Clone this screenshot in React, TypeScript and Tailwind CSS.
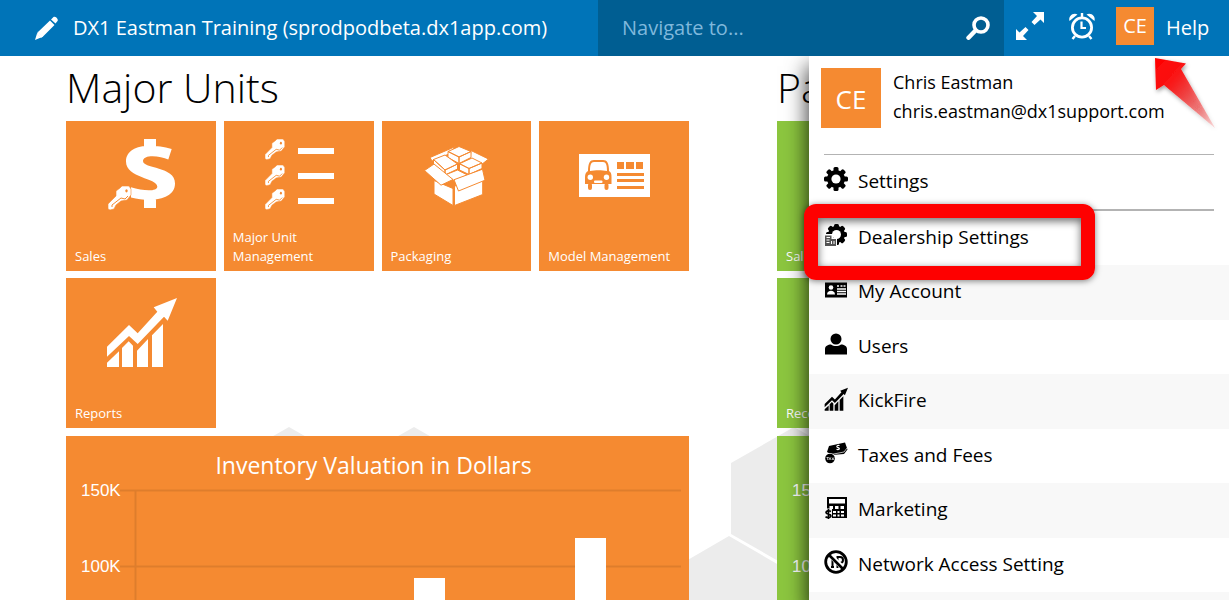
import React from "react";

type IconProps = { className?: string };

const ORANGE = "#f58a31";

const KeyShape = ({ transform }: { transform?: string }) => (
  <g transform={transform}>
    <path
      d="M12 2 14 0h7l2 3v6l-4 5-6 1-5 4-2 4-4 1-2-1v-5l8-8V5z"
      fill="white"
      stroke={ORANGE}
      strokeWidth="0.6"
    />
    <path d="M4 21v-2l9-7 4 1 3-3" fill="none" stroke={ORANGE} strokeWidth="1" />
    <ellipse cx="18.5" cy="4.8" rx="1.2" ry="1.6" fill={ORANGE} />
  </g>
);

const SalesIcon = ({ className }: IconProps) => (
  <svg viewBox="0 0 72 72" className={className} aria-hidden="true">
    <path
      fill="white"
      d="M39 0h12v9h-12zM39 58h12v11h-12zM66.700 10 63.300 20.500C55 16.500 38 15 38 22c0 8 32 5 32 22.500C70 60 48 64 26 58.500V48.300c12 3.700 26.300 4.700 26.300-.8C52.300 39 21 39 21 22.500 21 7 42 3 66.700 10z"
    />
    <KeyShape transform="translate(3 47)" />
  </svg>
);

const KeyListIcon = ({ className }: IconProps) => (
  <svg viewBox="0 0 72 72" className={className} aria-hidden="true">
    <KeyShape transform="translate(2 0) scale(.86)" />
    <KeyShape transform="translate(2 26) scale(.86)" />
    <KeyShape transform="translate(2 50) scale(.86)" />
    <path fill="white" d="M35 9h36v6H35zM35 34h36v6H35zM35 59h36v6H35z" />
  </svg>
);

const PackageIcon = ({ className }: IconProps) => (
  <svg viewBox="0 0 72 72" className={className} aria-hidden="true">
    <g fill="white" stroke={ORANGE} strokeWidth="1" strokeLinejoin="round">
      <path d="M10 18.500 35.500 7.500 29 15 12 22z" />
      <path d="M51 11.500 68.500 20 61 26 50 20z" />
      <path d="M28 12.500 39 7.500l12 5-12 5.500zM28 12.500v6l11 6V18zM51 12.500v6l-12 6V18z" />
      <path d="M13.500 20.500 25 16l12.500 9L25 31zM13.500 20.500V25L25 36v-5zM37.500 25v5L25 36v-5z" />
      <path d="M39.500 24.700 52 19l10 5-13 5.500zM39.500 24.700V31l9.500 4.500v-6zM62 24v5.500l-13 6v-6z" />
      <path d="m25 36 12.500-5 10 5L34 41.500z" />
      <path d="m14 41.500 19 8V66.500L14 55z" />
      <path d="M34.500 47 62.700 41v14.500L34.500 66.500z" />
      <path d="m4.500 31.500 9.500-6.500 19 15.500-12 5.700z" />
      <path d="m34 40.700 28.500-10.500 2.500 11-26.500 10.800z" />
    </g>
  </svg>
);

const ModelIcon = ({ className }: IconProps) => (
  <svg viewBox="0 0 72 72" className={className} aria-hidden="true">
    <path fill="white" d="M1 15h71v43H1z" />
    <g fill={ORANGE}>
      <path d="M39 23h7v7h-7zM48 23h8v7h-8zM58 23h7v7h-7zM39 34h27v3H39zM39 40h27v3H39zM39 47h27v3H39z" />
      <path d="M10 32c0-8 2-11 6-11h9c4 0 6 3 6 11 2 1 2.500 3 2.500 6v7H7v-7c0-3 1-5 3-6z" />
      <rect x="10" y="44" width="4" height="7" rx="2" />
      <rect x="26.500" y="44" width="4" height="7" rx="2" />
    </g>
    <g fill="white">
      <path d="M12 32c0-6 1-9 4-9h9c3 0 4 3 4 9-5-1-12-1-17 0z" />
      <circle cx="12.300" cy="38.300" r="2.700" />
      <circle cx="28.500" cy="38.300" r="2.700" />
      <rect x="16" y="41.500" width="8.500" height="2.500" rx="1" />
    </g>
  </svg>
);

const GrowthIcon = ({ className }: IconProps) => (
  <svg viewBox="0 0 72 72" className={className} fill="currentColor" aria-hidden="true">
    <path d="M2 50.700 24 29l8.700 8.300 19.600-21.600-3.600-4.400L72 2l-9.300 22.700-3.700-4L32.700 48 24 40 2 60.700z" />
    <path d="M2 66.700 14 55.300V71H2zM17 52l6.700-6.700L28 49.700V71H17zM32 54.700 43 43v28H32zM47 39.300 58 28v43H47z" />
  </svg>
);

const teeth = [0, 45, 90, 135];

const GearIcon = ({ className }: IconProps) => (
  <svg viewBox="0 0 24 24" className={className} aria-hidden="true">
    {teeth.map((angle) => (
      <rect key={angle} x="9.500" y="0" width="5" height="24" rx="1.500" transform={`rotate(${angle} 12 12)`} />
    ))}
    <circle cx="12" cy="12" r="9" />
    <circle cx="12" cy="12" r="4.600" fill="white" />
  </svg>
);

const DealershipIcon = ({ className }: IconProps) => (
  <svg viewBox="0 0 24 24" className={className} aria-hidden="true">
    {teeth.map((angle) => (
      <rect key={angle} x="10" y="1" width="5" height="21" rx="1.500" transform={`rotate(${angle} 12.500 11.500)`} />
    ))}
    <circle cx="12.500" cy="11.500" r="8.500" />
    <circle cx="12.500" cy="11.500" r="4.500" fill="white" />
    <path d="M0 11h9v4h4v9H0z" fill="white" />
    <path d="M1 12.500h6.500v3.500H12v7H1z" fill="#555" />
    <path d="M2.500 14.500H6M2.500 17h3M2.500 19.500h3M7.500 18v3M10 18v3" stroke="white" strokeWidth="1" />
  </svg>
);

const IdCardIcon = ({ className }: IconProps) => (
  <svg viewBox="0 0 24 24" className={className} aria-hidden="true">
    <path d="M1 4.500h22v15H1z" />
    <circle cx="7" cy="9.500" r="2.300" fill="white" />
    <path d="M3 16.500c0-5 8-5 8 0z" fill="white" />
    <path d="M13 8h2M16.500 8h2M19.500 8h2M13 11h9M13 13.500h9M13 16h9" stroke="white" strokeWidth="1.300" />
  </svg>
);

const UserIcon = ({ className }: IconProps) => (
  <svg viewBox="0 0 24 24" className={className} aria-hidden="true">
    <circle cx="12" cy="7" r="5.500" />
    <path d="M1 22.500V17c0-3 3-4.500 6-4.500 3 2 7 2 10 0 3 0 6 1.500 6 4.500v5.500z" />
  </svg>
);

const TaxIcon = ({ className }: IconProps) => (
  <svg viewBox="0 0 24 24" className={className} aria-hidden="true">
    <path d="m5 5 16-3.500 2.500 7L20 13 8 14l-5-3z" />
    <path d="m7 13.500 13-2.500 3-4" fill="none" stroke="white" strokeWidth=".7" />
    <path d="M15.500 4.500c-2-.5-3 .5-2.500 1.500.5.800 2 .5 2.300 1.500.2 1-1.300 1.500-2.800.8" fill="none" stroke="white" strokeWidth="1.200" />
    <circle cx="6" cy="17.500" r="5.500" fill="white" />
    <circle cx="6" cy="17.500" r="4.800" />
    <path d="M2.500 16.500h2.300M3.700 16.500V19M5 19l1-2.500L7 19M8 16.500 9.800 19M9.800 16.500 8 19" fill="none" stroke="white" strokeWidth=".7" />
  </svg>
);

const CalculatorIcon = ({ className }: IconProps) => (
  <svg viewBox="0 0 24 24" className={className} aria-hidden="true">
    <path d="M3 1h20v21H7v-9H3z" />
    <path
      fill="white"
      d="M5 3h16v4.500H5zM5.500 10h3.500v3h-3.500zM11 10h3.500v3H11zM16.500 10H20v3h-3.500zM9 15h3v2H9zM13.500 15h2v2h-2zM17 15h3v2h-3zM9 18.500h3v2H9zM13.500 18.500h2v2h-2zM17 18.500h3v2h-3z"
    />
    <path d="M0 12.500h8V24H0z" fill="#f8f8f8" />
    <path d="M7 15.500c-2.500-1.500-5-.5-5 1 0 2 5 1.300 5 3.500 0 1.700-3.500 2-5.500.7M4.500 13v10" fill="none" stroke="black" strokeWidth="1.700" />
  </svg>
);

const NoNetworkIcon = ({ className }: IconProps) => (
  <svg viewBox="0 0 24 24" className={className} fill="none" stroke="black" aria-hidden="true">
    <path d="M7 7h3M8.500 7v9M7 17h3M13.500 18V7h2.500c4 0 4 6 0 6h-2.500" strokeWidth="2" />
    <path d="m4.500 3.500 16 16" stroke="white" strokeWidth="5" />
    <circle cx="12" cy="12" r="10.300" strokeWidth="2.800" />
    <path d="m4.500 4.500 15 15" strokeWidth="2.600" />
  </svg>
);

const PencilIcon = ({ className }: IconProps) => (
  <svg viewBox="0 0 24 24" className={className} fill="white" aria-hidden="true">
    <path d="M16 3.500 18.500 1c1.500-1.500 5.500 2 4 4l-2 2.500zM15 4.500 19.500 9 7.500 21 3 16zM2 17.500 6 21.500 0 24z" />
    <path d="M3 15.500 8 20.500 6 22 2 18z" />
  </svg>
);

const SearchIcon = ({ className }: IconProps) => (
  <svg viewBox="0 0 24 24" className={className} fill="none" stroke="white" aria-hidden="true">
    <circle cx="15" cy="9" r="7" strokeWidth="3.600" />
    <path d="m9.500 14.500-7 7.200" strokeWidth="4.400" strokeLinecap="round" />
  </svg>
);

const ExpandIcon = ({ className }: IconProps) => (
  <svg viewBox="0 0 28 28" className={className} fill="white" aria-hidden="true">
    <path d="M17 0h11v11l-3.500-3.500-6 5.500-3-3 5.500-6zM0 28V17l3.500 3.500 6-5.500 3 3L7 24l4 4z" />
  </svg>
);

const AlarmIcon = ({ className }: IconProps) => (
  <svg viewBox="0 0 28 28" className={className} fill="none" stroke="white" aria-hidden="true">
    <circle cx="14" cy="15.500" r="9.600" strokeWidth="2.800" />
    <path d="M13.500 9.500V16H18" strokeWidth="2.200" />
    <path d="M14 1v4M7 24l-2.500 3M21 24l2.500 3" strokeWidth="2.400" />
    <path d="M1.500 9C0 4.500 5 0 9.500 2.500zM26.500 9C28 4.500 23 0 18.500 2.500z" fill="white" stroke="none" />
  </svg>
);

const majorUnits = [
  { title: "Sales", Icon: SalesIcon },
  { title: "Major Unit Management", Icon: KeyListIcon },
  { title: "Packaging", Icon: PackageIcon },
  { title: "Model Management", Icon: ModelIcon },
  { title: "Reports", Icon: GrowthIcon },
];

const menuItems = [
  { title: "Dealership Settings", Icon: DealershipIcon, marked: true },
  { title: "My Account", Icon: IdCardIcon },
  { title: "Users", Icon: UserIcon },
  { title: "KickFire", Icon: GrowthIcon },
  { title: "Taxes and Fees", Icon: TaxIcon },
  { title: "Marketing", Icon: CalculatorIcon },
  { title: "Network Access Setting", Icon: NoNetworkIcon },
];

const bars = [
  { x: 348, top: 96 },
  { x: 509, top: 56 },
];

const Chart = ({ showBars }: { showBars?: boolean }) => (
  <svg viewBox="0 0 623 260" className="block w-full">
    <g stroke="black" strokeOpacity=".09" strokeWidth="2">
      <path d="M54 8.500h561M54 84.500h561M69.500 8v252" />
    </g>
    {showBars && bars.map((bar) => <rect key={bar.x} x={bar.x} y={bar.top} width="31" height="200" fill="white" />)}
    <g fill="white" fontSize="17" fontFamily="Liberation Sans, Arial, sans-serif">
      <text x="15" y="14">150K</text>
      <text x="15" y="90">100K</text>
    </g>
  </svg>
);

function Header() {
  return (
    <header className="flex h-14 shrink-0 bg-[#0074b8] text-xl text-white">
      <div className="flex min-w-0 flex-1 items-center gap-3.5 pl-[35px]">
        <button type="button" aria-label="Edit">
          <PencilIcon className="h-6 w-6" />
        </button>
        <h1 className="truncate">DX1 Eastman Training (sprodpodbeta.dx1app.com)</h1>
      </div>
      <form className="flex w-[406px] items-center bg-[#005e92] pr-3.5 pl-6">
        <input
          type="text"
          aria-label="Navigate to"
          placeholder="Navigate to..."
          className="min-w-0 flex-1 bg-transparent outline-none placeholder:text-[#7fb8dc]"
        />
        <button type="button" aria-label="Search">
          <SearchIcon className="h-6 w-6" />
        </button>
      </form>
      <nav className="flex w-[225px] items-center pb-1 pl-3">
        <button type="button" aria-label="Full screen">
          <ExpandIcon className="h-7 w-7" />
        </button>
        <button type="button" aria-label="Reminders" className="ml-6">
          <AlarmIcon className="h-7 w-7" />
        </button>
        <button type="button" aria-label="Account menu" className="ml-5 h-[38px] w-[38px] bg-[#f58a31]">
          CE
        </button>
        <a href="#help" className="ml-3 pt-1">
          Help
        </a>
      </nav>
    </header>
  );
}

function AccountMenu() {
  return (
    <aside className="absolute inset-y-0 right-0 w-[420px] bg-white text-[19px] text-black shadow-[0_12px_20px_2px_rgba(0,0,0,0.75)]">
      <div className="flex gap-3 px-3 pt-3 pb-[26px]">
        <div className="flex h-[60px] w-[60px] items-center justify-center bg-[#f58a31] pt-0.5 text-[26px] text-white">
          CE
        </div>
        <div className="text-lg leading-[29px]">
          <p>Chris Eastman</p>
          <p>chris.eastman@dx1support.com</p>
        </div>
      </div>
      <a
        href="#settings"
        className="mx-[15px] flex h-[57px] items-center gap-2.5 border-t border-b-2 border-[#b3b3b3] pb-0.5"
      >
        <GearIcon className="mb-1 h-6 w-6" />
        Settings
      </a>
      <ul>
        {menuItems.map(({ title, Icon, marked }) => (
          <li key={title} className="relative odd:h-[54px] even:h-[55px] even:bg-[#f8f8f8]">
            <a href="#menu" className="flex h-full items-center gap-2.5 px-[15px] pb-0.5">
              <Icon className="mb-1 h-6 w-6" />
              {title}
            </a>
            {marked && (
              <div className="pointer-events-none absolute -top-[7px] -left-[5px] z-10 h-[76px] w-[291px] rounded-xl border-[14px] border-[#fe0000] shadow-[0_1px_6px_rgba(0,0,0,0.5),inset_0_3px_8px_rgba(0,0,0,0.6)]" />
            )}
          </li>
        ))}
        <li className="h-[54px] bg-[#f8f8f8]" />
      </ul>
      {/* pointer towards the account button */}
      <svg viewBox="0 0 70 80" className="pointer-events-none absolute -top-1 right-2.5 h-20 w-[70px]" aria-hidden="true">
        <defs>
          <linearGradient id="pointer" x1="0" y1="0" x2="1" y2="1">
            <stop offset="0" stopColor="#f00" />
            <stop offset=".3" stopColor="#fa1414" />
            <stop offset="1" stopColor="#e22" stopOpacity=".15" />
          </linearGradient>
          <filter id="pointerShadow" x="-20%" y="-20%" width="150%" height="150%">
            <feDropShadow dx="1" dy="2" stdDeviation="2" floodOpacity=".4" />
          </filter>
        </defs>
        <path d="M6 6 37 11.500 32 17 66 76 15 33 7 38z" fill="url(#pointer)" filter="url(#pointerShadow)" />
      </svg>
    </aside>
  );
}

export default function App() {
  return (
    <div className="flex h-screen flex-col overflow-hidden bg-white font-['Open_Sans',sans-serif]">
      <Header />
      <main className="relative flex-1 overflow-hidden">
        <svg className="absolute top-0 left-0 h-[640px] w-[1229px]" fill="#ececec" aria-hidden="true">
          <path d="M289 371 352 407v71l-63 36-63-36v-71zM414 371l63 36v71l-63 36-63-36v-71z" />
          <path d="M794 371l63 36v71l-63 36-63-36v-71zM729 480l62 36v71l-62 36-62-36v-71z" />
        </svg>
        <div className="relative flex gap-[88px] pl-[66px]">
          <section className="w-[623px] shrink-0">
            <h2 className="pb-[3px] text-[41px] leading-[62px] font-light">Major Units</h2>
            <div className="grid grid-cols-4 gap-x-2 gap-y-[7px]">
              {majorUnits.map(({ title, Icon }) => (
                <a
                  key={title}
                  href="#tile"
                  className="flex h-[150px] flex-col items-center bg-[#f58a31] px-[9px] pt-[18px] pb-[5px] text-[13px] leading-[19px] text-white"
                >
                  <Icon className="h-[72px] w-[72px]" />
                  <span className="mt-auto w-full">{title}</span>
                </a>
              ))}
            </div>
            <div className="mt-2 bg-[#f58a31] pt-3 text-white">
              <h3 className="pr-2 text-center text-[23px] leading-[34px]">Inventory Valuation in Dollars</h3>
              <Chart showBars />
            </div>
          </section>
          <section className="w-[623px] shrink-0">
            <h2 className="pb-[3px] text-[41px] leading-[62px] font-light">Parts</h2>
            <div className="grid grid-cols-4 gap-x-2 gap-y-[7px]">
              {["Sales", "Receiving"].map((title) => (
                <a
                  key={title}
                  href="#tile"
                  className="col-start-1 flex h-[150px] items-end bg-[#8cc63f] px-[9px] pb-[5px] text-[13px] leading-[19px] text-white"
                >
                  {title}
                </a>
              ))}
            </div>
            <div className="mt-2 bg-[#8cc63f] pt-[46px]">
              <Chart />
            </div>
          </section>
        </div>
        <AccountMenu />
      </main>
    </div>
  );
}
